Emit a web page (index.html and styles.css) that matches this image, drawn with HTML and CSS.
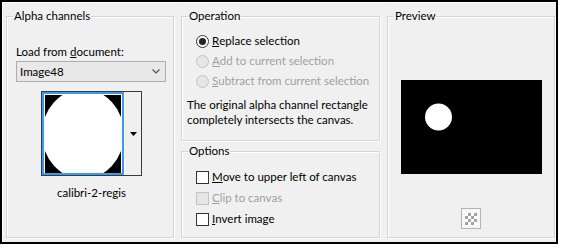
FILE: index.html
```html
<!DOCTYPE html>
<html lang="en">
<head>
  <meta charset="UTF-8" />
  <title>Alpha channels</title>
  <link rel="stylesheet" href="styles.css">
</head>
<body>

  <div class="frame">
    <div class="dialog">

      <fieldset class="group alpha">
        <legend>Alpha channels</legend>
        <div class="group-body">
          <div class="field-label">Load from <u>d</u>ocument:</div>
          <div class="combo">
            <span>Image48</span>
            <svg width="8" height="5" viewBox="0 0 8 5"><path d="M0.5 0.5 L4 4 L7.5 0.5" fill="none" stroke="#555" stroke-width="1.2"/></svg>
          </div>
          <div class="thumb-picker">
            <div class="thumb">
              <svg width="76" height="78" viewBox="0 0 76 78">
                <rect width="76" height="78" fill="#000"/>
                <ellipse cx="38" cy="39" rx="41" ry="45" fill="#fff"/>
              </svg>
            </div>
            <div class="thumb-drop">
              <svg width="7" height="4" viewBox="0 0 7 4"><path d="M0 0 H7 L3.5 4 Z" fill="#000"/></svg>
            </div>
          </div>
          <div class="thumb-name">calibri-2-regis</div>
        </div>
      </fieldset>

      <div class="middle">
        <fieldset class="group operation">
          <legend>Operation</legend>
          <div class="choice-list">
            <div class="choice"><span class="radio checked"></span><u>R</u>eplace selection</div>
            <div class="choice disabled"><span class="radio"></span><u>A</u>dd to current selection</div>
            <div class="choice disabled"><span class="radio"></span><u>S</u>ubtract from current selection</div>
          </div>
          <p class="note">The original alpha channel rectangle<br>completely intersects the canvas.</p>
        </fieldset>

        <fieldset class="group options">
          <legend>Options</legend>
          <div class="choice-list">
            <div class="choice"><span class="check"></span><u>M</u>ove to upper left of canvas</div>
            <div class="choice disabled"><span class="check"></span><u>C</u>lip to canvas</div>
            <div class="choice"><span class="check"></span><u>I</u>nvert image</div>
          </div>
        </fieldset>
      </div>

      <fieldset class="group preview">
        <legend>Preview</legend>
        <div class="preview-box">
          <svg width="141" height="94" viewBox="0 0 141 94">
            <rect width="141" height="94" fill="#000"/>
            <circle cx="37.5" cy="37" r="13.5" fill="#fff"/>
          </svg>
        </div>
        <div class="checker-btn"><span></span></div>
      </fieldset>

    </div>
  </div>

</body>
</html>
```

FILE: styles.css
```css
body {
  margin: 0;
  padding: 0;
  background-color: #fff;
  color: #000;
  font-family: 'Lato', sans-serif;
  font-size: 11.5px;
}

.frame {
  width: 558px;
  height: 244px;
  border: 2px solid #000;
  box-sizing: border-box;
}

.dialog {
  height: 100%;
  box-sizing: border-box;
  border-top: 1px solid #fff;
  border-left: 1px solid #fff;
  background-color: #f0f0f0;
  padding: 5px 1px 4px 3px;
  display: flex;
  gap: 7px;
}

/* Group boxes */
.group {
  margin: 0;
  padding: 0;
  min-width: 0;
  border: 1px solid #d5d5d5;
  box-shadow: 1px 1px 0 #fff, inset 1px 1px 0 #fff;
}

.group legend {
  margin-left: 6px;
  padding: 0 1px;
  line-height: 16px;
}

.alpha {
  width: 168px;
  box-sizing: border-box;
}

.group-body {
  padding-left: 9px;
}

.field-label {
  margin-top: 20px;
  line-height: 16px;
}

.combo {
  width: 150px;
  height: 21px;
  margin-top: 1px;
  box-sizing: border-box;
  border: 1px solid #adadad;
  background-color: #e8e8e8;
  display: flex;
  align-items: center;
  justify-content: space-between;
  padding: 0 5px 0 3px;
}

.thumb-picker {
  width: 101px;
  height: 85px;
  margin: 9px 0 0 25px;
  box-sizing: border-box;
  border: 1px solid #3a3a3a;
  display: flex;
}

.thumb {
  border: 2px solid #3c9aec;
  padding: 1px;
  background-color: #fff;
  line-height: 0;
}

.thumb svg {
  display: block;
}

.thumb-drop {
  flex: 1;
  display: flex;
  align-items: center;
  justify-content: center;
  background-color: #f0f0f0;
  border-left: 1px solid #fff;
}

.thumb-name {
  width: 101px;
  margin-left: 25px;
  margin-top: 9px;
  text-align: center;
  line-height: 16px;
}

.middle {
  width: 199px;
  display: flex;
  flex-direction: column;
  gap: 2px;
}

.operation {
  height: 133px;
  box-sizing: border-box;
}

.options {
  flex: 1;
}

.choice-list {
  margin-top: 9px;
  padding-left: 14px;
  display: flex;
  flex-direction: column;
  gap: 4px;
}

.choice {
  display: flex;
  align-items: center;
  height: 16px;
  line-height: 16px;
  white-space: nowrap;
}

.choice.disabled {
  color: #a0a0a0;
}

.options .choice-list {
  margin-top: 10px;
  gap: 5px;
}

.radio {
  width: 13px;
  height: 13px;
  box-sizing: border-box;
  margin-right: 3px;
  border: 1px solid #333;
  border-radius: 50%;
  background-color: #fff;
  display: flex;
  align-items: center;
  justify-content: center;
}

.radio.checked::after {
  content: '';
  width: 7px;
  height: 7px;
  border-radius: 50%;
  background-color: #222;
}

.disabled .radio,
.disabled .check {
  border-color: #c4c4c4;
  background-color: #e6e6e6;
}

.check {
  width: 13px;
  height: 13px;
  box-sizing: border-box;
  margin-right: 3px;
  border: 1px solid #333;
  background-color: #fff;
}

.note {
  margin: 8px 0 0 5px;
  line-height: 15px;
  white-space: nowrap;
}

.preview {
  width: 168px;
  box-sizing: border-box;
  display: flex;
  flex-direction: column;
  align-items: center;
}

.preview-box {
  margin-top: 56px;
  line-height: 0;
}

.checker-btn {
  margin-top: 34px;
  width: 20px;
  height: 21px;
  box-sizing: border-box;
  border: 1px solid #b4b4b4;
  background-color: #f7f7f7;
  display: flex;
  align-items: center;
  justify-content: center;
}

.checker-btn span {
  width: 12px;
  height: 12px;
  background: repeating-conic-gradient(#a3a3a3 0 25%, #fff 0 50%) 0 0 / 6px 6px;
}
```
